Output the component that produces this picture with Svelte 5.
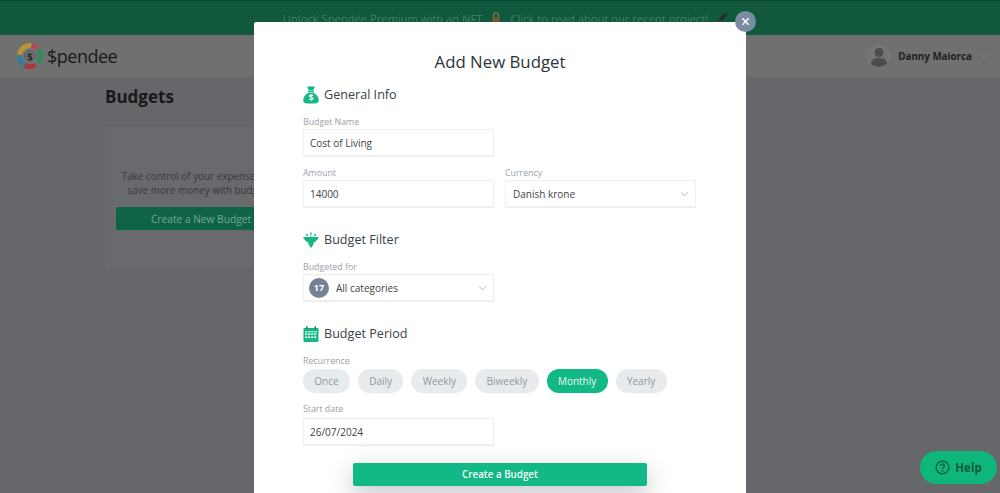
<script lang="ts">
	const periods = ['Once', 'Daily', 'Weekly', 'Biweekly', 'Monthly', 'Yearly'];
	const ring = [
		{ color: '#2f8a5c', start: 0, size: 22 },
		{ color: '#a8383c', start: 26, size: 17 },
		{ color: '#2f7f9c', start: 44, size: 17 },
		{ color: '#b8952f', start: 62, size: 25 },
		{ color: '#b2475c', start: 88, size: 10 }
	];
	let recurrence = $state('Monthly');
</script>

<div class="screen">
	<div class="banner">
		<span>Unlock Spendee Premium with an NFT</span>
		<svg class="emoji" viewBox="0 0 14 14" aria-hidden="true">
			<path d="M4 6V4a3 3 0 0 1 6 0v2" fill="none" stroke="#7f7a4f" stroke-width="1.5" />
			<rect x="2.5" y="6" width="9" height="7" rx="1" fill="#6d5a34" />
		</svg>
		<span>Click to read about our recent project!</span>
		<svg class="emoji" viewBox="0 0 14 14" aria-hidden="true">
			<path d="M2 11 5 6l5-4 3-1-1 3-4 5z" fill="#2c2a26" />
			<path d="M1 13l3-3 1 1-3 2z" fill="#7a3b2c" />
		</svg>
	</div>

	<header class="topbar">
		<div class="brand">
			<svg class="logo" viewBox="0 0 26 26" aria-hidden="true">
				<g transform="rotate(-36 13 13)" fill="none" stroke-width="5">
					{#each ring as seg}
						<circle
							cx="13"
							cy="13"
							r="10.500"
							pathLength="100"
							stroke={seg.color}
							stroke-dasharray="{seg.size} 100"
							stroke-dashoffset={-seg.start}
						/>
					{/each}
				</g>
				<circle cx="13" cy="13" r="7.500" fill="#77797b" />
				<circle cx="13" cy="13" r="5.500" fill="#6c6e70" stroke="#3f4244" stroke-width=".5" />
				<text x="13" y="16.500" text-anchor="middle" class="logo-mark">$</text>
			</svg>
			<span class="wordmark">$pendee</span>
		</div>
		<div class="account">
			<div class="avatar">
				<svg viewBox="0 0 24 24" aria-hidden="true">
					<circle cx="12" cy="8.500" r="4.500" fill="#4b4d4f" />
					<path d="M4 20c0-4 3-6 8-6s8 2 8 6a12 12 0 0 1-16 0z" fill="#4b4d4f" />
				</svg>
			</div>
			<span class="account-name">Danny Maiorca</span>
			<svg class="chevron dim" viewBox="0 0 10 6" aria-hidden="true"><path d="M1 1l4 4 4-4" /></svg>
		</div>
	</header>

	<main class="page">
		<h1>Budgets</h1>
		<section class="empty-card">
			<p>Take control of your expenses and save more money with budgets!</p>
			<button class="new-budget">Create a New Budget</button>
		</section>
	</main>

	<button class="help">
		<svg viewBox="0 0 16 16" aria-hidden="true">
			<circle cx="8" cy="8" r="6.800" fill="none" stroke="#0c5a3d" stroke-width="1.400" />
			<path d="M6 6.300a2 2 0 1 1 3 1.700c-.7.400-1 .8-1 1.500" fill="none" stroke="#0c5a3d" stroke-width="1.400" />
			<circle cx="8" cy="11.600" r=".9" fill="#0c5a3d" />
		</svg>
		Help
	</button>

	<div class="modal">
		<button class="close" aria-label="Close">
			<svg viewBox="0 0 10 10" aria-hidden="true"><path d="M1.500 1.500l7 7M8.500 1.500l-7 7" /></svg>
		</button>
		<h2>Add New Budget</h2>

		<h3 class="section-title first">
			<svg viewBox="0 0 16 18" aria-hidden="true">
				<path d="M4.200 .5h7.600L10.300 4.500H5.700z" fill="#12b886" />
				<rect x="5" y="4.900" width="6" height="1.300" fill="#12b886" />
				<path d="M5.300 6.800h5.400C13.500 8.500 15.800 11.500 15.800 14c0 2.300-1.600 3.500-3.800 3.500H4C1.800 17.500.2 16.300.2 14c0-2.500 2.300-5.500 5.100-7.200z" fill="#12b886" />
				<text x="8" y="15.200" text-anchor="middle" class="money-mark">$</text>
			</svg>
			General Info
		</h3>
		<div class="field name-field">
			<span class="label">Budget Name</span>
			<div class="input">Cost of Living</div>
		</div>
		<div class="row">
			<div class="field">
				<span class="label">Amount</span>
				<div class="input">14000</div>
			</div>
			<div class="field">
				<span class="label">Currency</span>
				<div class="input select currency">
					Danish krone
					<svg class="chevron" viewBox="0 0 10 6" aria-hidden="true"><path d="M1 1l4 4 4-4" /></svg>
				</div>
			</div>
		</div>

		<h3 class="section-title filter">
			<svg viewBox="0 0 16 16" aria-hidden="true">
				<path d="M.3 5h15.400c0 2-3.200 4.500-5.200 5.800v1.700L8 16l-2.500-3.500v-1.700C3.500 9.500.3 7 .3 5z" fill="#12b886" />
				<circle cx="4" cy="3" r="1" fill="#12b886" />
				<circle cx="8" cy="1.600" r="1" fill="#12b886" />
				<circle cx="8" cy="3.800" r=".7" fill="#12b886" />
				<circle cx="12" cy="3" r="1" fill="#12b886" />
			</svg>
			Budget Filter
		</h3>
		<div class="field budgeted">
			<span class="label">Budgeted for</span>
			<div class="input select categories">
				<span class="count">17</span>
				All categories
				<svg class="chevron" viewBox="0 0 10 6" aria-hidden="true"><path d="M1 1l4 4 4-4" /></svg>
			</div>
		</div>

		<h3 class="section-title period">
			<svg viewBox="0 0 16 16" aria-hidden="true">
				<path d="M1.500 2H14.500a1 1 0 0 1 1 1v12a1 1 0 0 1-1 1H1.500a1 1 0 0 1-1-1V3a1 1 0 0 1 1-1z" fill="#12b886" />
				<rect x="3" y=".3" width="1.600" height="3" fill="#0d8f69" />
				<rect x="11.400" y=".3" width="1.600" height="3" fill="#0d8f69" />
				<g fill="#fff">
					<rect x="2" y="5.500" width="12" height=".8" />
					<rect x="2.200" y="7.400" width="2" height="1.700" />
					<rect x="5.200" y="7.400" width="2" height="1.700" />
					<rect x="8.200" y="7.400" width="2" height="1.700" />
					<rect x="11.200" y="7.400" width="2" height="1.700" />
					<rect x="2.200" y="10.400" width="2" height="1.700" />
					<rect x="5.200" y="10.400" width="2" height="1.700" />
					<rect x="8.200" y="10.400" width="2" height="1.700" />
					<rect x="11.200" y="10.400" width="2" height="1.700" />
				</g>
			</svg>
			Budget Period
		</h3>
		<div class="field recurrence">
			<span class="label">Recurrence</span>
			<div class="pills">
				{#each periods as period}
					<button class="pill" class:active={recurrence === period} onclick={() => (recurrence = period)}>
						{period}
					</button>
				{/each}
			</div>
		</div>
		<div class="field date-field">
			<span class="label">Start date</span>
			<div class="input">26/07/2024</div>
		</div>
		<button class="submit">Create a Budget</button>
	</div>
</div>

<style>
	:global(body) {
		margin: 0;
	}

	.screen {
		position: relative;
		width: 1000px;
		height: 493px;
		overflow: hidden;
		background: #66676a;
		font-family: 'Open Sans', sans-serif;
	}

	button {
		font-family: inherit;
		border: 0;
		padding: 0;
	}

	.banner {
		height: 35px;
		box-sizing: border-box;
		padding: 10px 0 0 11px;
		background: #11583d;
		border-top: 1px solid #0c4a33;
		display: flex;
		justify-content: center;
		align-items: flex-start;
		gap: 8px;
		font-size: 11.200px;
		line-height: 16px;
		color: #417f66;
		white-space: nowrap;
	}

	.emoji {
		width: 12px;
		height: 14px;
		flex: none;
	}

	.topbar {
		height: 42px;
		background: #6f706f;
		border-bottom: 1px solid #68696a;
		display: flex;
		justify-content: space-between;
		align-items: center;
		padding: 0 12px 0 17px;
	}

	.brand {
		display: flex;
		align-items: center;
		gap: 4px;
	}

	.logo {
		width: 26px;
		height: 26px;
	}

	.logo-mark {
		font-family: 'Open Sans', sans-serif;
		font-size: 9.500px;
		font-weight: 600;
		fill: #17191b;
	}

	.money-mark {
		font-family: 'Open Sans', sans-serif;
		font-size: 9px;
		font-weight: 700;
		fill: #fff;
	}

	.wordmark {
		font-size: 18px;
		line-height: 26px;
		color: #17191b;
		letter-spacing: -0.5px;
	}

	.account {
		display: flex;
		align-items: center;
		gap: 7px;
	}

	.avatar {
		width: 24px;
		height: 24px;
		border-radius: 50%;
		background: #747577;
		box-shadow: 0 0 0 1px #727374;
		overflow: hidden;
	}

	.avatar svg {
		display: block;
		width: 24px;
		height: 24px;
	}

	.account-name {
		font-size: 9.800px;
		font-weight: 700;
		color: #1d1f22;
	}

	.chevron {
		width: 9px;
		height: 6px;
		flex: none;
		fill: none;
		stroke: #a9afb6;
		stroke-width: 1;
	}

	.chevron.dim {
		stroke: #7f8183;
		margin-left: 0;
	}

	.page {
		padding: 7px 0 0 105px;
	}

	h1 {
		margin: 0;
		font-size: 17px;
		line-height: 24px;
		font-weight: 700;
		color: #17191c;
	}

	.empty-card {
		box-sizing: border-box;
		width: 192px;
		height: 141px;
		margin-top: 18px;
		padding: 42px 11px 0;
		background: #696a6d;
		box-shadow: 0 0 3px #636467;
		text-align: center;
	}

	.empty-card p {
		margin: 0 -2px;
		font-size: 9.900px;
		line-height: 14px;
		color: #38393c;
	}

	.new-budget {
		display: block;
		width: 170px;
		height: 23px;
		margin-top: 10px;
		border-radius: 2px;
		background: #0e6444;
		color: #78a593;
		font-size: 10.200px;
	}

	.help {
		position: absolute;
		left: 920px;
		top: 451px;
		width: 77px;
		height: 33px;
		border-radius: 17px;
		background: #0fb67c;
		color: #0c5a3d;
		font-size: 11.500px;
		font-weight: 700;
		display: flex;
		align-items: center;
		justify-content: center;
		gap: 5px;
	}

	.help svg {
		width: 15px;
		height: 15px;
	}

	.modal {
		position: absolute;
		left: 254px;
		top: 22px;
		width: 492px;
		height: 490px;
		box-sizing: border-box;
		padding: 0 49px;
		background: #fff;
		border-radius: 2px;
		color: #2f3539;
	}

	.close {
		position: absolute;
		right: -10px;
		top: -11px;
		width: 21px;
		height: 21px;
		border-radius: 50%;
		background: #7a8da0;
		display: flex;
		align-items: center;
		justify-content: center;
	}

	.close svg {
		width: 9px;
		height: 9px;
		fill: none;
		stroke: #fff;
		stroke-width: 1.600;
	}

	h2 {
		margin: 0;
		padding-top: 28px;
		font-size: 16.800px;
		line-height: 24px;
		font-weight: 400;
		text-align: center;
		color: #2c3338;
	}

	.section-title {
		margin: 0;
		height: 20px;
		display: flex;
		align-items: center;
		gap: 5px;
		font-size: 12.600px;
		line-height: 20px;
		font-weight: 400;
		color: #3a4147;
	}

	.section-title svg {
		width: 16px;
		height: 18px;
		flex: none;
	}

	.section-title.first {
		margin-top: 11px;
	}

	.section-title.filter {
		margin-top: 23px;
	}

	.section-title.period {
		margin-top: 23px;
	}

	.field {
		width: 191px;
		margin-top: 8px;
	}

	.name-field {
		margin-top: 11px;
	}

	.budgeted {
		margin-top: 11px;
	}

	.recurrence {
		margin-top: 11px;
	}

	.recurrence .label {
		margin-bottom: 2px;
	}

	.date-field {
		margin-top: 10px;
	}

	.date-field .label {
		margin-bottom: 3px;
	}

	.label {
		display: block;
		font-size: 8.800px;
		line-height: 12px;
		color: #9aa1a8;
		margin-bottom: 1px;
	}

	.input {
		box-sizing: border-box;
		height: 27px;
		padding: 0 6px;
		border: 1px solid #eef0f2;
		box-shadow: 0 1px 1px #eceef0;
		display: flex;
		align-items: center;
		font-size: 10px;
		color: #3d4347;
	}

	.select {
		position: relative;
	}

	.select .chevron {
		position: absolute;
		right: 6px;
		top: 10px;
	}

	.currency {
		padding-left: 7px;
	}

	.row {
		display: flex;
		gap: 11px;
		margin-top: 11px;
	}

	.row .field {
		margin-top: 0;
	}

	.categories {
		padding-left: 5px;
		gap: 7px;
	}

	.count {
		width: 20px;
		height: 20px;
		border-radius: 50%;
		background: #728396;
		color: #fff;
		font-size: 9px;
		font-weight: 700;
		display: flex;
		align-items: center;
		justify-content: center;
	}

	.pills {
		display: flex;
		gap: 8px;
		width: 400px;
	}

	.pill {
		height: 24px;
		padding: 0 11.300px;
		border-radius: 12px;
		background: #e8ebee;
		color: #8e969e;
		font-size: 10px;
	}

	.pill.active {
		background: #12b886;
		color: #eafaf5;
	}

	.submit {
		display: block;
		width: 294px;
		height: 23px;
		margin: 18px auto 0;
		border-radius: 2px;
		background: #12b886;
		color: #f2fcf8;
		font-size: 9.800px;
		font-weight: 600;
		box-shadow: 0 8px 24px rgba(40, 50, 60, 0.3);
	}
</style>
